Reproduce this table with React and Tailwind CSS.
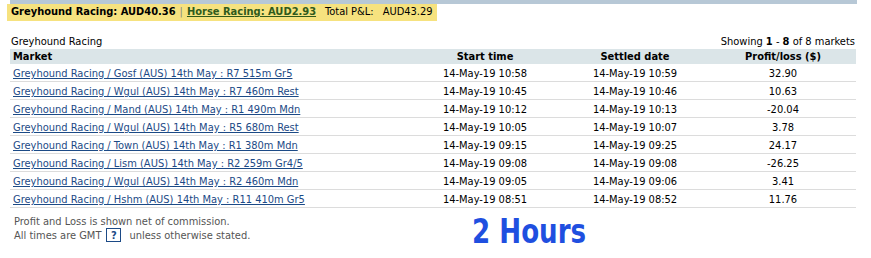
import React from "react";

const rows = [
  ["Greyhound Racing / Gosf (AUS) 14th May : R7 515m Gr5", "14-May-19 10:58", "14-May-19 10:59", "32.90"],
  ["Greyhound Racing / Wgul (AUS) 14th May : R7 460m Rest", "14-May-19 10:45", "14-May-19 10:46", "10.63"],
  ["Greyhound Racing / Mand (AUS) 14th May : R1 490m Mdn", "14-May-19 10:12", "14-May-19 10:13", "-20.04"],
  ["Greyhound Racing / Wgul (AUS) 14th May : R5 680m Rest", "14-May-19 10:05", "14-May-19 10:07", "3.78"],
  ["Greyhound Racing / Town (AUS) 14th May : R1 380m Mdn", "14-May-19 09:15", "14-May-19 09:25", "24.17"],
  ["Greyhound Racing / Lism (AUS) 14th May : R2 259m Gr4/5", "14-May-19 09:08", "14-May-19 09:08", "-26.25"],
  ["Greyhound Racing / Wgul (AUS) 14th May : R2 460m Mdn", "14-May-19 09:05", "14-May-19 09:06", "3.41"],
  ["Greyhound Racing / Hshm (AUS) 14th May : R11 410m Gr5", "14-May-19 08:51", "14-May-19 08:52", "11.76"],
];

export default function App() {
  return (
    <div
      className="w-[871px] h-[258px] bg-white text-[11px] text-black overflow-hidden"
      style={{ fontFamily: "Tahoma, 'DejaVu Sans Condensed', 'DejaVu Sans', sans-serif" }}
    >
      <div className="ml-[10px] w-[847px] h-[4px] bg-[#b7c8d6]" />
      <div className="ml-[7px] w-[430px] h-[17px] bg-[#f6e27f] flex items-center pl-[4px] whitespace-nowrap">
        <span className="font-bold">Greyhound Racing: AUD40.36</span>
        <span className="text-[#888] mx-[4px]">|</span>
        <span className="font-bold underline text-[#2f5a1c]">Horse Racing: AUD2.93</span>
        <span className="ml-[9px]">Total P&amp;L:</span>
        <span className="ml-[9px]">AUD43.29</span>
      </div>
      <div className="ml-[10px] w-[846px] mt-[13px]">
        <div className="flex justify-between items-center h-[15px] leading-[15px] px-[1px]">
          <span>Greyhound Racing</span>
          <span>
            Showing <b>1</b> - <b>8</b> of 8 markets
          </span>
        </div>
        <div className="grid grid-cols-[400px_150px_150px_1fr] h-[15px] leading-[15px] items-center bg-[#dbe5e8] font-bold">
          <div className="pl-[3px]">Market</div>
          <div className="text-center">Start time</div>
          <div className="text-center">Settled date</div>
          <div className="text-center">Profit/loss ($)</div>
        </div>
        {rows.map((r, i) => (
          <div
            key={i}
            className="grid grid-cols-[400px_150px_150px_1fr] h-[18px] pt-[2px] leading-[15px] items-center border-b border-[#dcdcdc]"
          >
            <div className="pl-[3px]">
              <span className="underline text-[#1c4a86]">{r[0]}</span>
            </div>
            <div className="text-center">{r[1]}</div>
            <div className="text-center">{r[2]}</div>
            <div className="text-center">{r[3]}</div>
          </div>
        ))}
        <div className="flex">
          <div className="w-[400px] pl-[4px] pt-[7px] text-[#555] leading-[13px]">
            <div>Profit and Loss is shown net of commission.</div>
            <div className="flex items-center">
              All times are GMT
              <span className="inline-flex items-center justify-center w-[15px] h-[14px] border border-[#1c4a86] text-[#1c4a86] font-bold ml-[5px] mr-[8px]">
                ?
              </span>
              unless otherwise stated.
            </div>
          </div>
          <div className="pl-[62px] pt-[4px]">
            <div className="text-[33px] leading-[40px] font-bold text-[#1f4fe0] whitespace-nowrap scale-x-[0.88] origin-left">
              2 Hours
            </div>
          </div>
        </div>
      </div>
    </div>
  );
}
